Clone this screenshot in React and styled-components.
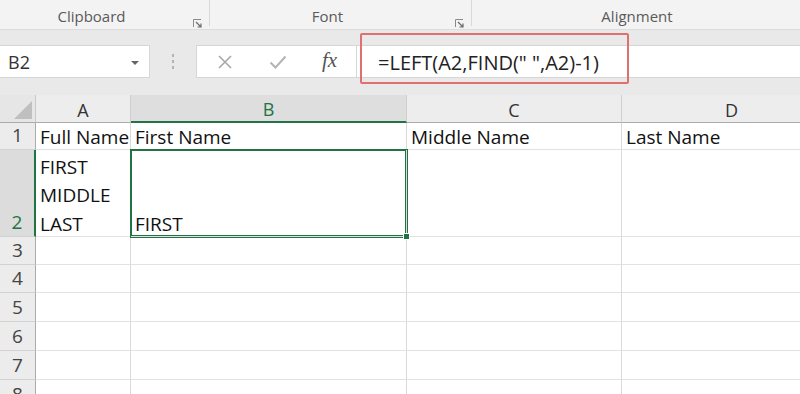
import React from 'react';
import styled, { createGlobalStyle, css } from 'styled-components';

const Global = createGlobalStyle`
  html, body { margin: 0; padding: 0; background: #fff; }
  body { width: 800px; height: 394px; overflow: hidden; font-family: "Open Sans", "Noto Sans", sans-serif; }
`;

const Page = styled.div`
  width: 800px;
  height: 394px;
  overflow: hidden;
  display: flex;
  flex-direction: column;
`;

const Ribbon = styled.div`
  height: 30px;
  flex: none;
  box-sizing: border-box;
  background: #f3f3f3;
  border-bottom: 1px solid #dcdcdc;
  display: grid;
  grid-template-columns: 210px 262px 330px;
`;

const Group = styled.div`
  position: relative;
  display: flex;
  justify-content: center;
  align-items: flex-start;
  padding: 6px ${p => (p.$last ? '0' : '26px')} 0 0;
  font-size: 15px;
  color: #5a5a5a;
  border-right: ${p => (p.$last ? 'none' : '1px solid #d8d8d8')};
  margin-bottom: 4px;
`;

const Launcher = styled.span`
  position: absolute;
  right: 7px;
  top: 12px;
  width: 9px;
  height: 9px;
`;

const FormulaBand = styled.div`
  height: 65px;
  flex: none;
  box-sizing: border-box;
  background: #e9e9e9;
  display: flex;
  align-items: flex-start;
  padding-top: 15px;
  position: relative;
`;

const NameBox = styled.div`
  width: 150px;
  height: 33px;
  box-sizing: border-box;
  background: #fff;
  border: 1px solid #d6d6d6;
  border-left: none;
  display: flex;
  align-items: center;
  justify-content: space-between;
  padding: 0 10px 0 8px;
  font-size: 18px;
  color: #333;
`;

const Caret = styled.span`
  width: 0;
  height: 0;
  border-left: 4px solid transparent;
  border-right: 4px solid transparent;
  border-top: 4px solid #666;
  margin-top: 2px;
`;

const Grip = styled.div`
  width: 46px;
  height: 33px;
  display: flex;
  flex-direction: column;
  align-items: center;
  justify-content: center;
  gap: 3px;
  span { width: 2px; height: 3px; background: #b4b4b4; }
`;

const Buttons = styled.div`
  width: 161px;
  height: 33px;
  box-sizing: border-box;
  background: #fff;
  border: 1px solid #d6d6d6;
  display: grid;
  grid-template-columns: 56px 50px 1fr;
  align-items: center;
  justify-items: center;
`;

const Fx = styled.span`
  font-family: "Liberation Serif", "DejaVu Serif", serif;
  font-style: italic;
  font-size: 21px;
  color: #555;
  margin-top: -2px;
`;

const FormulaInput = styled.div`
  flex: 1;
  height: 33px;
  box-sizing: border-box;
  background: #fff;
  border-top: 1px solid #d6d6d6;
  border-bottom: 1px solid #d6d6d6;
  display: flex;
  align-items: center;
  padding: 1px 0 0 21px;
  font-size: 20px;
  color: #222;
`;

const Highlight = styled.div`
  position: absolute;
  left: 360px;
  top: 3px;
  width: 269px;
  height: 51px;
  box-sizing: border-box;
  border: 2px solid #e07070;
  border-radius: 2px;
  pointer-events: none;
`;

const Sheet = styled.div`
  flex: 1;
  display: grid;
  grid-template-columns: 36px 95px 276px 215px 220px;
  grid-template-rows: ${p => p.$rows};
  overflow: hidden;
  font-size: 19px;
  color: #111;
`;

const Corner = styled.div`
  background: #e6e6e6;
  border-right: 1px solid #c9c9c9;
  border-bottom: 1px solid #ababab;
  position: relative;
  &::after {
    content: '';
    position: absolute;
    right: 3px;
    bottom: 3px;
    border-left: 18px solid transparent;
    border-bottom: 18px solid #bfbfbf;
  }
`;

const ColHead = styled.div`
  box-sizing: border-box;
  display: flex;
  justify-content: center;
  align-items: flex-end;
  line-height: 24px;
  font-size: 18px;
  color: #333;
  background: #ededed;
  border-right: 1px solid #cfcfcf;
  border-bottom: 1px solid #ababab;
  ${p => p.$selected && css`
    background: #dedede;
    color: #217346;
    border-bottom: 2px solid #217346;
    line-height: 23px;
  `}
`;

const RowHead = styled.div`
  box-sizing: border-box;
  display: flex;
  justify-content: center;
  align-items: flex-end;
  line-height: 28px;
  font-size: 19px;
  color: #444;
  background: #ececec;
  border-right: 1px solid #ababab;
  border-bottom: 1px solid #d2d2d2;
  ${p => p.$selected && css`
    background: #dcdcdc;
    color: #217346;
    border-right: 2px solid #217346;
  `}
`;

const Cell = styled.div`
  box-sizing: border-box;
  position: relative;
  display: flex;
  flex-direction: column;
  justify-content: flex-end;
  padding: 0 4px;
  white-space: nowrap;
  border-right: 1px solid #dadada;
  border-bottom: 1px solid #e2e2e2;
  ${p => p.$active && css`
    z-index: 1;
    box-shadow: 0 0 0 1px #217346, inset 0 0 0 1px #217346;
    &::after {
      content: '';
      position: absolute;
      right: -4px;
      bottom: -4px;
      width: 5px;
      height: 5px;
      background: #217346;
      border: 1px solid #fff;
    }
  `}
`;

const Lines = styled.div`
  display: flex;
  flex-direction: column;
  line-height: 28.5px;
  margin-bottom: -2px;
`;

const cols = ['A', 'B', 'C', 'D'];

const rows = [
  { n: 1, h: 27, cells: [['Full Name'], ['First Name'], ['Middle Name'], ['Last Name']] },
  { n: 2, h: 87, cells: [['FIRST', 'MIDDLE', 'LAST'], ['FIRST'], [], []] },
  { n: 3, h: 28, cells: [[], [], [], []] },
  { n: 4, h: 28, cells: [[], [], [], []] },
  { n: 5, h: 29, cells: [[], [], [], []] },
  { n: 6, h: 29, cells: [[], [], [], []] },
  { n: 7, h: 29, cells: [[], [], [], []] },
  { n: 8, h: 29, cells: [[], [], [], []] },
];

const Close = () => (
  <svg width="16" height="16" viewBox="0 0 16 16">
    <path d="M2 2 L14 14 M14 2 L2 14" stroke="#a8a8a8" strokeWidth="1.6" fill="none" />
  </svg>
);

const Check = () => (
  <svg width="18" height="16" viewBox="0 0 18 16">
    <path d="M1.5 8.5 L6.5 13.5 L16.5 2.5" stroke="#b4b4b4" strokeWidth="2" fill="none" />
  </svg>
);

const LauncherIcon = () => (
  <Launcher>
    <svg width="9" height="9" viewBox="0 0 9 9">
      <path d="M0.5 8 V0.5 H8" stroke="#8a8a8a" strokeWidth="1" fill="none" />
      <path d="M3 3 L8 8 M8 4.5 V8 H4.5" stroke="#6a6a6a" strokeWidth="1.2" fill="none" />
    </svg>
  </Launcher>
);

export default function App() {
  return (
    <Page>
      <Global />
      <Ribbon>
        <Group>Clipboard<LauncherIcon /></Group>
        <Group>Font<LauncherIcon /></Group>
        <Group $last>Alignment</Group>
      </Ribbon>
      <FormulaBand>
        <NameBox>B2<Caret /></NameBox>
        <Grip><span /><span /><span /></Grip>
        <Buttons>
          <Close />
          <Check />
          <Fx>fx</Fx>
        </Buttons>
        <FormulaInput>=LEFT(A2,FIND(" ",A2)-1)</FormulaInput>
        <Highlight />
      </FormulaBand>
      <Sheet $rows={`28px ${rows.map(r => r.h + 'px').join(' ')}`}>
        <Corner />
        {cols.map(c => (
          <ColHead key={c} $selected={c === 'B'}>{c}</ColHead>
        ))}
        {rows.map(r => (
          <React.Fragment key={r.n}>
            <RowHead $selected={r.n === 2}>{r.n}</RowHead>
            {r.cells.map((lines, i) => (
              <Cell key={i} $active={r.n === 2 && i === 1}>
                <Lines>
                  {lines.map((t, j) => <span key={j}>{t}</span>)}
                </Lines>
              </Cell>
            ))}
          </React.Fragment>
        ))}
      </Sheet>
    </Page>
  );
}
